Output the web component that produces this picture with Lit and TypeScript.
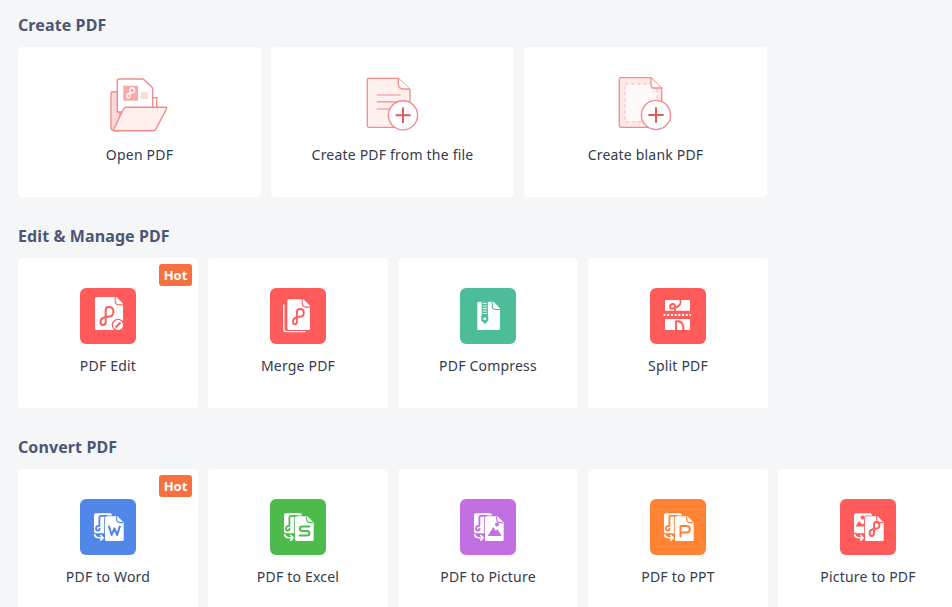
import { LitElement, html, css, svg } from "lit";
import { customElement } from "lit/decorators.js";

const pdfPath = "M25.7 31.5V22.2Q25.7 19 28.8 19Q33.4 19 33.4 23.8Q33.4 28.7 28.2 28.8Q20.5 29.3 20.5 33.8Q20.5 37 23 37Q25.7 37 25.7 33";

const docFold = (x: number, y: number, r: number, b: number, fill: string) => svg`
  <path d="M${x + 1.5} ${y}H${r - 6.5}L${r} ${y + 6.5}V${b - 1.5}Q${r} ${b} ${r - 1.5} ${b}H${x + 1.5}Q${x} ${b} ${x} ${b - 1.5}V${y + 1.5}Q${x} ${y} ${x + 1.5} ${y}Z" fill="#fff"/>
  <path d="M${r - 7.8} ${y - 0.3}V${y + 4}Q${r - 7.8} ${y + 7.8} ${r - 4} ${y + 7.8}H${r + 0.3}" fill="none" stroke="${fill}" stroke-width="1.1"/>`;

const convertBase = (c: string, front: unknown, backPicture = false) => svg`
  <rect x="14" y="14.3" width="18" height="20" rx="2" fill="#fff"/>
  ${backPicture
    ? svg`<circle cx="22.5" cy="18.5" r="1.9" fill="${c}"/><path d="M15.5 27.5L19 22L22.5 25.5L25 23.5V27.5H15.5Z" fill="${c}"/>`
    : svg`<path d="M19.4 27.5V18.6Q19.4 16.8 21 16.8H27.5M19.4 27Q16 26.8 16 29.4Q16 31.6 18 31.6Q19.6 31.6 19.6 29" fill="none" stroke="${c}" stroke-width="1.8"/>`}
  <path d="M14.5 35.2Q15 38.8 19 38.8H23M20.3 36L23.2 38.8L20.3 41.6" fill="none" stroke="#fff" stroke-width="1.6"/>
  <path d="M26.5 17.3H37.5L43.7 23.5V40.5Q43.7 42 42.2 42H26.5Q25 42 25 40.5V18.8Q25 17.3 26.5 17.3Z" fill="#fff" stroke="${c}" stroke-width="1.6" paint-order="stroke"/>
  <path d="M36.6 17.6V20Q36.6 23.6 40.2 23.6H43" fill="none" stroke="${c}" stroke-width="1.1"/>
  ${front}`;

const RED = "#ff5b5b";
const GREEN = "#4dbd99";
const BLUE = "#5087e8";
const XLS = "#4cbb4c";
const PUR = "#c26fdf";
const ORG = "#ff8333";

const tile = (bg: string, content: unknown) => html`
  <svg class="tile" width="56" height="56" viewBox="0 0 56 56" aria-hidden="true">
    <rect width="56" height="56" rx="6" fill="${bg}"/>${content}
  </svg>`;

const stroke = (d: string, c: string, w = 1.6) => svg`<path d="${d}" fill="none" stroke="${c}" stroke-width="${w}" stroke-linecap="round" stroke-linejoin="round"/>`;

const S = "#f58a8a";
const openIcon = html`<svg class="big" width="71" height="60" viewBox="104 75 71 60" aria-hidden="true">
  <path d="M117 91.7H113Q111 91.7 111 93.7V127Q111 130.7 114.5 130.7H120V100Z" fill="#fdd9d9" stroke="${S}" stroke-width="1.4"/>
  <path d="M119.3 79H143.3L152.7 88V112H117.3V81Q117.3 79 119.3 79Z" fill="#fff" stroke="${S}" stroke-width="1.4"/>
  <path d="M152.7 97.7H156.7V110H152.7Z" fill="#fff" stroke="${S}" stroke-width="1.4"/>
  <rect x="123.3" y="85.7" width="14.7" height="15" fill="#f9a8a8"/>
  <path d="M130 96V89.6Q130 88 131.7 88Q134.6 88 134.6 90.6Q134.6 93 131.5 93Q126.7 93.4 126.7 95.8Q126.7 98 128.4 98Q130 98 130 96" fill="none" stroke="#fff" stroke-width="1.3"/>
  <rect x="141" y="92.3" width="7.3" height="6.7" fill="#fbdada"/>
  <path d="M125.5 107.3H165.2Q167.3 107.3 166.4 109.3L155.8 129.2Q155 130.7 153.5 130.7H114.7Q113.2 130.7 113.8 129.2L123.6 108.8Q124.3 107.3 125.5 107.3Z" fill="#fff0f0" stroke="${S}" stroke-width="1.4"/>
</svg>`;

const createIcon = html`<svg class="big" width="71" height="60" viewBox="357 75 71 60" aria-hidden="true">
  <path d="M369 78.3H398.3L410 89.5V125.5Q410 127.3 408 127.3H369Q367.3 127.3 367.3 125.5V80Q367.3 78.3 369 78.3Z" fill="#fff0f0" stroke="${S}" stroke-width="1.3"/>
  <path d="M398.3 78.6V84Q398.3 89 403.5 89H409.7" fill="#fff" stroke="${S}" stroke-width="1.3"/>
  <path d="M376.7 95H400.7M376.7 101.8H396M376.7 109H392" fill="none" stroke="${S}" stroke-width="1.2"/>
  <circle cx="403" cy="115.3" r="14.6" fill="#fff" stroke="${S}" stroke-width="1.4"/>
  <path d="M395.5 115.3H410.8M403 107.6V123" stroke="#e85a5a" stroke-width="2" fill="none"/>
</svg>`;

const blankIcon = html`<svg class="big" width="71" height="60" viewBox="610 75 71 60" aria-hidden="true">
  <path d="M621 77.6H651L661.7 88.3V125.6Q661.7 127.3 660 127.3H621Q619.3 127.3 619.3 125.6V79.3Q619.3 77.6 621 77.6Z" fill="#ffe9e9" stroke="${S}" stroke-width="1.3"/>
  <path d="M625 84H651V89Q651 93 655 93H657V121.7H625Z" fill="#fffafa"/>
  <rect x="625" y="84" width="32" height="37.7" fill="none" stroke="#fcc7c7" stroke-width="1.4" stroke-dasharray="3.5 2.6"/>
  <path d="M651 77.9V84.5Q651 88 654.5 88H661.4" fill="#fff" stroke="${S}" stroke-width="1.3"/>
  <circle cx="656" cy="115" r="14.6" fill="#fff" stroke="${S}" stroke-width="1.4"/>
  <path d="M648.3 115H663.7M656 107.3V122.7" stroke="#e85a5a" stroke-width="2" fill="none"/>
</svg>`;

const editIcon = tile(RED, svg`
  ${docFold(15, 9, 43, 42, RED)}
  ${stroke(pdfPath, RED, 2)}
  <circle cx="38" cy="37" r="5.6" fill="#fff" stroke="${RED}" stroke-width="1.3"/>
  <path d="M35.5 39.5L40.5 34.5" stroke="${RED}" stroke-width="2"/>`);

const mergeIcon = tile(RED, svg`
  ${stroke("M13.8 17V41Q13.8 43.6 16.4 43.6H35", "#fff", 1.4)}
  ${docFold(17.3, 11.3, 40, 42, RED)}
  ${stroke("M27 32V24.2Q27 21 30 21Q33.8 21 33.8 24.7Q33.8 28.8 29.5 28.8Q23 29.3 23 33.5Q23 36.3 25 36.3Q27 36.3 27 33", RED, 1.9)}`);

const compressIcon = tile(GREEN, svg`
  ${docFold(17.3, 13.7, 40, 42, GREEN)}
  <rect x="21.7" y="13.5" width="6.2" height="15" fill="${GREEN}"/>
  <path d="M22.8 15.5H26.8M22.8 18H26.8M22.8 20.5H26.8M22.8 23H26.8M22.8 25.5H26.8" stroke="#fff" stroke-width="1.1"/>
  <path d="M21.3 27.5H28.3V32.5L24.8 36L21.3 32.5Z" fill="${GREEN}"/>
  <rect x="23.5" y="29.5" width="2.6" height="2.6" fill="#fff"/>`);

const splitIcon = tile(RED, svg`
  <path d="M16 12H39Q40 12 40 13V22.7H15V13Q15 12 16 12Z" fill="#fff"/>
  <path d="M15 31H40V41Q40 42 39 42H16Q15 42 15 41Z" fill="#fff"/>
  <path d="M13.5 27H41" stroke="#fff" stroke-width="1.8" stroke-dasharray="2 1.7"/>
  ${stroke("M25 22.5V18.5Q25 15.6 22.6 16Q20 16.5 20 19Q20 20.6 22 20.6Q26 20.6 30 16.5Q31.4 14.5 30.2 12", RED, 1.8)}
  ${stroke("M26 42V33.2H28Q33.5 33.2 33.5 42", RED, 1.9)}`);

const wordIcon = convertBase(BLUE, stroke("M29 27.5L31.6 36L34.4 29.5L37.2 36L39.8 27.5", BLUE, 2));
const excelIcon = convertBase(XLS, stroke("M39.4 27.5H32.6Q29.8 27.5 29.8 29.8Q29.8 32 32.6 32H36.8Q39.4 32 39.4 34.2Q39.4 36.5 36.8 36.5H29.6", XLS, 2));
const picIcon = convertBase(PUR, svg`
  <circle cx="37" cy="25.5" r="2" fill="${PUR}"/>
  <path d="M27.8 37L33.2 28L35.9 32L37.4 30L41.5 37Z" fill="${PUR}"/>`);
const pptIcon = convertBase(ORG, stroke("M30.5 37.5V27H36.5Q39.8 27 39.8 30.2Q39.8 33.4 36.5 33.4H30.5", ORG, 2));
const p2pIcon = convertBase(RED, stroke("M34 33V25.5Q34 23 36.3 23Q39.4 23 39.4 26.3Q39.4 29.6 35.8 29.7Q29.6 30 29.6 34Q29.6 37 31.8 37Q34 37 34 34", RED, 1.9), true);

interface Item { label: string; icon: unknown; hot?: boolean }

const wide: Item[] = [
  { label: "Open PDF", icon: openIcon },
  { label: "Create PDF from the file", icon: createIcon },
  { label: "Create blank PDF", icon: blankIcon },
];
const edit: Item[] = [
  { label: "PDF Edit", icon: editIcon, hot: true },
  { label: "Merge PDF", icon: mergeIcon },
  { label: "PDF Compress", icon: compressIcon },
  { label: "Split PDF", icon: splitIcon },
];
const conv: Item[] = [
  { label: "PDF to Word", icon: tile(BLUE, wordIcon), hot: true },
  { label: "PDF to Excel", icon: tile(XLS, excelIcon) },
  { label: "PDF to Picture", icon: tile(PUR, picIcon) },
  { label: "PDF to PPT", icon: tile(ORG, pptIcon) },
  { label: "Picture to PDF", icon: tile(RED, p2pIcon) },
];

@customElement("app-root")
export class AppRoot extends LitElement {
  static styles = css`
    :host {
      display: block;
      width: 952px;
      height: 607px;
      overflow: hidden;
      box-sizing: border-box;
      padding: 15px 0 0 18px;
      background: #f5f6f8;
      font-family: "Noto Sans", "Open Sans", sans-serif;
    }
    h2 {
      margin: 0 0 12px;
      font-size: 16px;
      line-height: 20px;
      font-weight: 700;
      letter-spacing: 0.1px;
      color: #4b5675;
    }
    .row {
      display: flex;
      gap: 10px;
      margin-bottom: 29px;
    }
    .card {
      position: relative;
      flex: none;
      box-sizing: border-box;
      width: 180px;
      height: 150px;
      padding-top: 28px;
      background: #fff;
      border-radius: 4px;
      display: flex;
      flex-direction: column;
      align-items: center;
    }
    .card.wide {
      width: 243px;
    }
    .icon {
      height: 60px;
      display: flex;
      align-items: center;
      justify-content: center;
    }
    svg {
      display: block;
    }
    .label {
      margin-top: 10px;
      font-size: 14px;
      line-height: 20px;
      letter-spacing: 0.2px;
      color: #333a4d;
      white-space: nowrap;
    }
    .hot {
      position: absolute;
      top: 6px;
      right: 6px;
      width: 33px;
      height: 22px;
      border-radius: 3px;
      background: #f7703f;
      color: #fff;
      font-size: 13px;
      font-weight: 700;
      line-height: 22px;
      text-align: center;
    }
  `;

  private card(item: Item, wideCard = false) {
    return html`<div class="card ${wideCard ? "wide" : ""}">
      ${item.hot ? html`<span class="hot">Hot</span>` : ""}
      <div class="icon">${item.icon}</div>
      <div class="label">${item.label}</div>
    </div>`;
  }

  render() {
    return html`
      <h2>Create PDF</h2>
      <div class="row">${wide.map((i) => this.card(i, true))}</div>
      <h2>Edit &amp; Manage PDF</h2>
      <div class="row">${edit.map((i) => this.card(i))}</div>
      <h2>Convert PDF</h2>
      <div class="row">${conv.map((i) => this.card(i))}</div>
    `;
  }
}
